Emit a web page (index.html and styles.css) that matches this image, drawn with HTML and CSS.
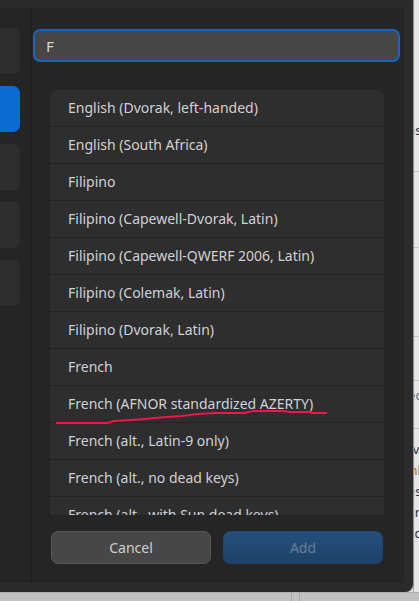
FILE: index.html
```html
<!DOCTYPE html>
<html lang="en">
<head>
  <meta charset="UTF-8" />
  <meta name="viewport" content="width=device-width, initial-scale=1.0" />
  <title>Add Input Source</title>
  <link rel="stylesheet" href="styles.css">
</head>
<body>
  <div class="screen">
    <div class="dialog">
      <div class="panel">
        <div class="sidebar">
          <div class="side-item"></div>
          <div class="side-item active"></div>
          <div class="side-item"></div>
          <div class="side-item"></div>
          <div class="side-item"></div>
        </div>

        <div class="main">
          <input class="search" type="text" value="F" />

          <div class="list">
            <div class="row">English (Dvorak, left-handed)</div>
            <div class="row">English (South Africa)</div>
            <div class="row">Filipino</div>
            <div class="row">Filipino (Capewell-Dvorak, Latin)</div>
            <div class="row">Filipino (Capewell-QWERF 2006, Latin)</div>
            <div class="row">Filipino (Colemak, Latin)</div>
            <div class="row">Filipino (Dvorak, Latin)</div>
            <div class="row">French</div>
            <div class="row">French (AFNOR standardized AZERTY)</div>
            <div class="row">French (alt., Latin-9 only)</div>
            <div class="row">French (alt., no dead keys)</div>
            <div class="row">French (alt., with Sun dead keys)</div>
          </div>

          <div class="actions">
            <button class="btn cancel">Cancel</button>
            <button class="btn add" disabled>Add</button>
          </div>
        </div>
      </div>

      <!-- hand-drawn underline on the AFNOR row -->
      <svg class="scribble" width="272" height="20" viewBox="0 0 272 20">
        <polyline points="1,15 52,15 58,13 75,12 90,11 98,10 111,9 126,8 141,6 160,5 188,5 197,3 226,3 235,4 254,4 256,5 270,5"
                  fill="none" stroke="#f0164a" stroke-width="2.2" stroke-linecap="round" stroke-linejoin="round"/>
      </svg>
    </div>

    <div class="behind">
      <div class="behind-text">
        <div class="bt l1">Passwords</div>
        <div class="bt-line l2"></div>
        <div class="bt-line l3"></div>
        <div class="bt-line l4"></div>
        <div class="bt-line l5"></div>
        <div class="bt l6">Receive</div>
        <div class="bt-line l7"></div>
        <div class="bt l8">Give</div>
        <div class="bt l9 orange">Unlimited</div>
        <div class="bt">Passes</div>
        <div class="bt">Funds</div>
        <div class="bt">Access</div>
      </div>
    </div>
  </div>

  <div class="taskbar">
    <div class="tb-sep"></div>
  </div>
</body>
</html>
```

FILE: styles.css
```css
* {
  box-sizing: border-box;
}
body {
  margin: 0;
  width: 419px;
  height: 601px;
  overflow: hidden;
  background: #dedede;
  font-family: "Noto Sans", "Open Sans", sans-serif;
}
.screen {
  display: flex;
  height: 592px;
}

/* dialog */
.dialog {
  position: relative;
  width: 413px;
  height: 592px;
  background: #2b2b2b;
  padding: 8px 9px 9px 0;
  border-bottom-right-radius: 8px;
  box-shadow: 0 0 2px rgba(0, 0, 0, 0.5);
}
.panel {
  display: flex;
  height: 100%;
  background: #252525;
}
.sidebar {
  width: 32px;
  border-right: 1px solid #1d1d1d;
  display: flex;
  flex-direction: column;
  gap: 12px;
  padding-top: 20px;
}
.side-item {
  width: 20px;
  height: 46px;
  background: #2e2e2e;
  border-radius: 0 7px 7px 0;
}
.side-item.active {
  background: #0b6bd3;
}
.main {
  flex: 1;
  display: flex;
  flex-direction: column;
  padding-top: 21px;
}
.search {
  margin-left: 1px;
  width: 367px;
  height: 33px;
  background: #464646;
  border: 2px solid #1565c8;
  border-radius: 7px;
  color: #d4d4d4;
  font-family: inherit;
  font-size: 15px;
  padding: 0 11px;
  outline: none;
}

/* list */
.list {
  margin: 28px 0 0 18px;
  width: 334px;
  height: 425px;
  overflow: hidden;
  background: #2e2e2e;
  border-radius: 8px 8px 0 0;
}
.row {
  height: 37px;
  line-height: 36px;
  padding-left: 18px;
  border-bottom: 1px solid #232323;
  color: #d0d1d6;
  font-size: 14px;
  white-space: nowrap;
}

/* buttons */
.actions {
  display: flex;
  gap: 12px;
  margin: 16px 0 0 19px;
}
.btn {
  width: 160px;
  height: 33px;
  border-radius: 7px;
  font-family: inherit;
  font-size: 14px;
}
.cancel {
  background: #474747;
  border: 1px solid #575757;
  color: #cfcfcf;
}
.add {
  background: linear-gradient(#24507c, #1e4269);
  border: 1px solid #1f4670;
  color: #687e96;
}

.scribble {
  position: absolute;
  left: 56px;
  top: 408px;
}

/* window behind the dialog */
.behind {
  width: 6px;
  height: 592px;
  overflow: hidden;
  background: #e6e6e6;
  border-left: 1px solid #a8a8a8;
}
.behind-text {
  margin-left: -14px;
  padding-top: 120px;
  font-size: 13px;
  color: #2a3140;
}
.bt {
  height: 21px;
  line-height: 21px;
  white-space: nowrap;
}
.bt-line {
  height: 1px;
  background: #c4c4c4;
}
.l2 { margin-top: 30px; }
.l3 { margin-top: 75px; }
.l4 { margin-top: 88px; }
.l5 { margin-top: 43px; }
.l6 { margin-top: 4px; color: #5a6a80; }
.l7 { margin-top: 22px; }
.l8 { margin-top: 10px; }
.orange { color: #b0642a; }

.taskbar {
  height: 9px;
  background: #c2c2c2;
  border-top: 1px solid #b0b0b0;
  position: relative;
}
.tb-sep {
  margin-left: 291px;
  width: 9px;
  height: 9px;
  border-left: 1px solid #a6a6a6;
  border-right: 1px solid #a6a6a6;
}
```
